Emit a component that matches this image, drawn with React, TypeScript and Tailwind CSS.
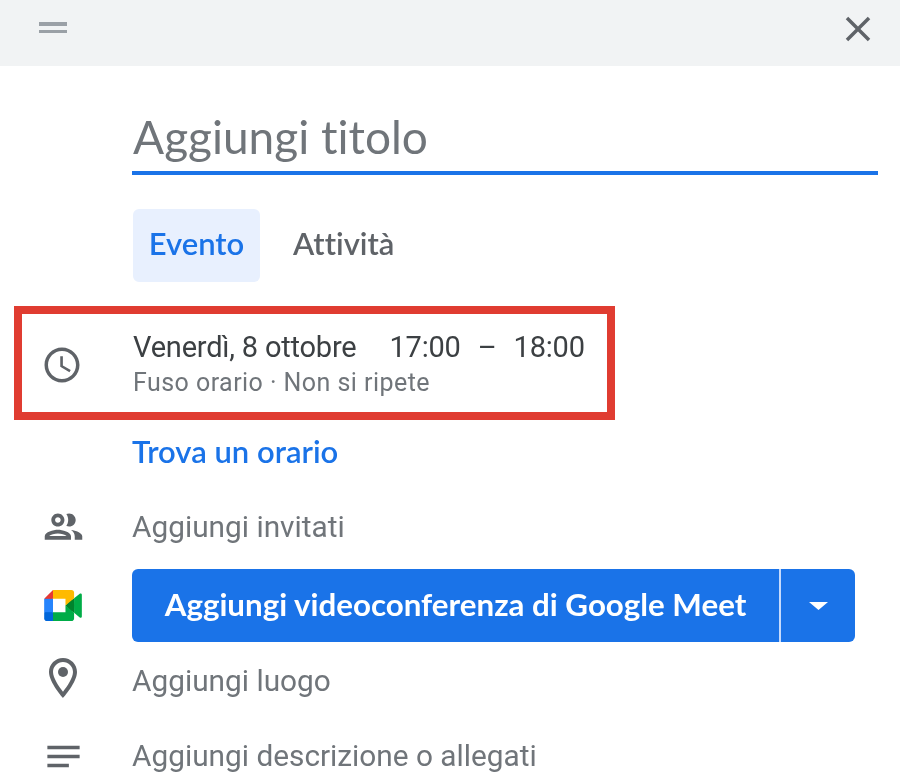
import React from "react";

const Icon = ({ d, size, children, className = "" }: { d?: string; size: number; children?: React.ReactNode; className?: string }) => (
  <svg width={size} height={size} viewBox="0 0 24 24" fill="#5f6368" className={className}>
    {d && <path d={d} />}
    {children}
  </svg>
);

const Row = ({ icon, children, className = "" }: { icon?: React.ReactNode; children: React.ReactNode; className?: string }) => (
  <div className={`flex items-center ${className}`}>
    <div className="w-[132px] shrink-0 flex items-center justify-center pr-[6px]">{icon}</div>
    {children}
  </div>
);

const Meet = () => (
  <svg width="38" height="31" viewBox="0 0 87.5 72">
    <path fill="#00832d" d="M49.5 36l8.53 9.75 11.47 7.33 2-17.02-2-16.64-11.69 6.44z" />
    <path fill="#0066da" d="M0 51.5V66c0 3.315 2.685 6 6 6h14.5l3-10.96-3-9.54-9.95-3z" />
    <path fill="#e53935" d="M20.5 0L0 20.5l10.55 3 9.95-3 2.95-9.41z" />
    <path fill="#2684fc" d="M20.5 20.5H0v31h20.5z" />
    <path fill="#00ac47" d="M82.6 8.68L69.5 19.42v33.66l13.16 10.79c1.97 1.54 4.85.135 4.85-2.37V11c0-2.535-2.945-3.925-4.91-2.32zM49.5 36v15.5h-29V72h43c3.315 0 6-2.685 6-6V53.08z" />
    <path fill="#ffba00" d="M63.5 0h-43v20.5h29V36l20-16.57V6c0-3.315-2.685-6-6-6z" />
  </svg>
);

const sans = "font-['Roboto',sans-serif]";
const display = "font-['Lato',sans-serif] [font-variant-ligatures:none]";

export default function App() {
  return (
    <div className={`w-[900px] h-[783px] overflow-hidden bg-white blur-[0.6px] ${sans}`}>
      <header className="h-[66px] bg-[#f1f3f4] flex items-center justify-between pl-[39px] pr-[21px]">
        <div className="flex flex-col gap-[4px] mb-[11px]">
          <div className="w-[28px] h-[3.5px] bg-[#9aa0a6]" />
          <div className="w-[28px] h-[3.5px] bg-[#9aa0a6]" />
        </div>
        <Icon size={42} d="M19 6.41L17.59 5 12 10.59 6.41 5 5 6.41 10.59 12 5 17.59 6.41 19 12 13.41 17.59 19 19 17.59 13.41 12z" className="mb-[8px]" />
      </header>

      <div className="ml-[132px] mr-[22px] h-[109px] border-b-[4px] border-[#1a73e8] flex items-end pb-[6px] pl-[1px]">
        <span className={`${display} text-[46px] leading-[56px] text-[#70757a]`}>Aggiungi titolo</span>
      </div>

      <div className="ml-[133px] mt-[34px] h-[73px] flex items-center">
        <div className={`${display} w-[127px] h-full rounded-[6px] bg-[#e8f0fe] flex items-center justify-center pb-[5px] text-[31px] font-semibold text-[#1a73e8]`}>Evento</div>
        <div className={`${display} ml-[33px] pb-[5px] text-[31px] font-semibold text-[#5f6368]`}>Attività</div>
      </div>

      <div className="ml-[14px] mt-[24px] w-[601px] h-[114px] border-[8px] border-[#e03c31] flex items-center">
        <div className="w-[111px] shrink-0 flex items-center justify-center pr-[31px]">
          <Icon size={42} className="mt-[3px]" d="M11.99 2C6.47 2 2 6.48 2 12s4.47 10 9.99 10C17.52 22 22 17.52 22 12S17.52 2 11.99 2zM12 20c-4.42 0-8-3.58-8-8s3.58-8 8-8 8 3.58 8 8-3.58 8-8 8zm.5-13H11v6l5.25 3.15.75-1.23-4.5-2.67z" />
        </div>
        <div className="flex flex-col pt-[1px]">
          <div className="flex text-[29px] leading-[37px] tracking-[-0.2px] text-[#3c4043] whitespace-pre">
            <span>Venerdì, 8 ottobre</span>
            <span className="ml-[33px]">17:00</span>
            <span className="ml-[17px]">–</span>
            <span className="ml-[17px]">18:00</span>
          </div>
          <div className="text-[25px] leading-[32px] tracking-[0.45px] text-[#70757a] pt-[1px]">Fuso orario · Non si ripete</div>
        </div>
      </div>

      <Row className="h-[66px]">
        <span className={`${display} pb-[4px] text-[31px] font-semibold text-[#1a73e8]`}>Trova un orario</span>
      </Row>

      <Row
        className="h-[82px]"
        icon={<Icon size={45} className="mb-[1px]" d="M9 13.75c-2.34 0-7 1.17-7 3.5V19h14v-1.75c0-2.33-4.66-3.5-7-3.5zM4.34 17c.84-.58 2.87-1.25 4.66-1.25s3.82.67 4.66 1.25H4.34zM9 12c1.93 0 3.5-1.57 3.5-3.5S10.93 5 9 5 5.5 6.57 5.5 8.5 7.07 12 9 12zm0-5c.83 0 1.5.67 1.5 1.5S9.83 10 9 10s-1.5-.67-1.5-1.5S8.17 7 9 7zm7.04 6.81c1.16.84 1.96 1.96 1.96 3.44V19h4v-1.75c0-2.02-3.5-3.17-5.96-3.44zM15 12c1.93 0 3.5-1.57 3.5-3.5S16.93 5 15 5c-.54 0-1.04.13-1.5.35.63.89 1 1.98 1 3.15s-.37 2.26-1 3.15c.46.22.96.35 1.5.35z" />}
      >
        <span className="text-[29.8px] text-[#70757a]">Aggiungi invitati</span>
      </Row>

      <div className="flex items-center h-[73px] mt-[1px]">
        <div className="w-[132px] shrink-0 flex items-center justify-center pr-[6px]"><Meet /></div>
        <div className="w-[723px] h-full rounded-[6px] bg-[#1a73e8] flex">
          <div className={`${display} w-[649px] flex items-center justify-center pb-[2px] text-[31.3px] font-bold text-white border-r-[2px] border-[#c6dafc]`}>Aggiungi videoconferenza di Google Meet</div>
          <div className="flex-1 flex items-center justify-center">
            <svg width="19" height="8" viewBox="0 0 19 8"><path d="M0 0h19L9.5 8z" fill="#fff" /></svg>
          </div>
        </div>
      </div>

      <Row
        className="h-[78px]"
        icon={
          <Icon size={48} className="mb-[6px]">
            <path d="M12 2C8.13 2 5 5.13 5 9c0 5.25 7 13 7 13s7-7.75 7-13c0-3.87-3.13-7-7-7zM7 9c0-2.76 2.24-5 5-5s5 2.24 5 5c0 2.88-2.88 7.19-5 9.88C9.92 16.21 7 11.85 7 9z" />
            <circle cx="12" cy="9" r="2.5" />
          </Icon>
        }
      >
        <span className="text-[29.8px] text-[#70757a]">Aggiungi luogo</span>
      </Row>

      <Row
        className="h-[72px]"
        icon={<Icon size={43} d="M3 18h12v-2H3v2zM3 6v2h18V6H3zm0 7h18v-2H3v2z" />}
      >
        <span className="text-[29.8px] text-[#70757a]">Aggiungi descrizione o allegati</span>
      </Row>
    </div>
  );
}
